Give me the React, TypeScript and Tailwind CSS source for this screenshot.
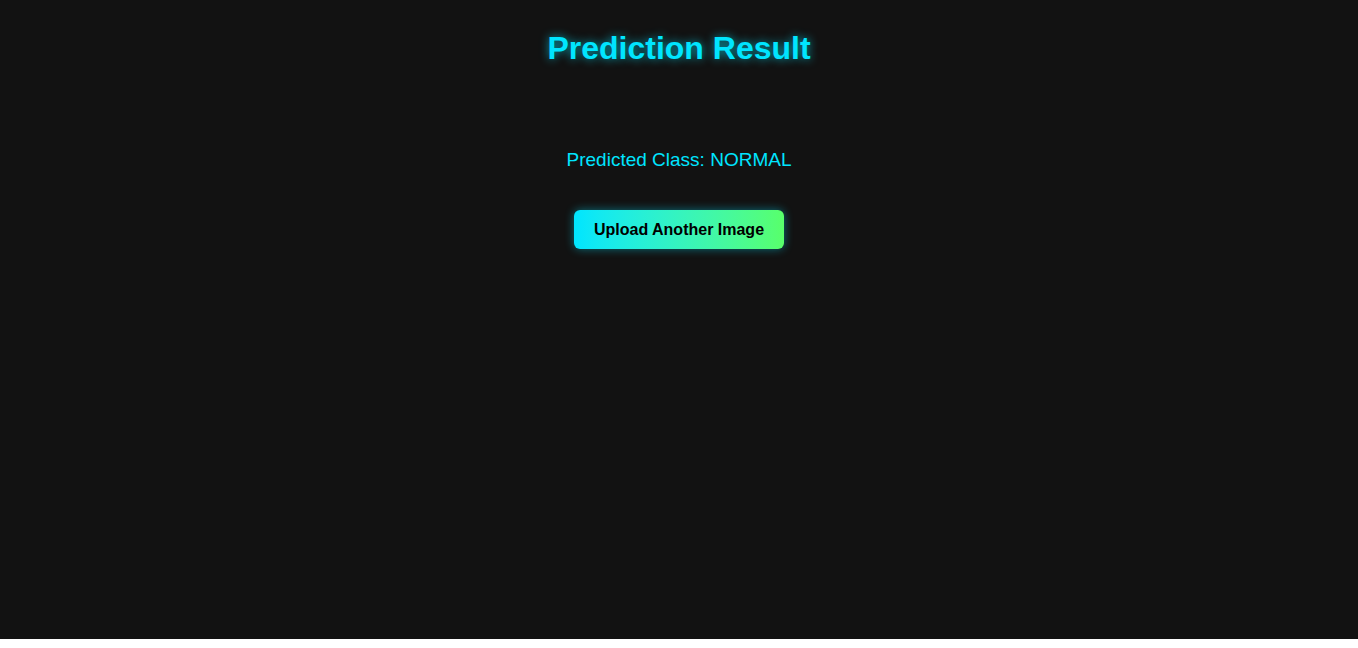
export default function App() {
  return (
    <div className="h-[639px] bg-[#121212] font-['Liberation_Sans',Arial,sans-serif] text-center">
      {/* header */}
      <h1 className="pt-[30px] text-[32px] leading-[37px] font-bold text-[#00e5ff] [text-shadow:0_0_10px_rgba(0,229,255,0.7)]">
        Prediction Result
      </h1>

      {/* result */}
      <p className="mt-[82px] text-[19px] leading-[22px] text-[#00e5ff]">
        Predicted Class: NORMAL
      </p>

      <button className="mt-[39px] h-[39px] px-5 rounded-md bg-gradient-to-r from-[#00e5ff] to-[#58ff6a] text-black text-base font-bold shadow-[0_0_10px_rgba(0,229,255,0.45)]">
        Upload Another Image
      </button>
    </div>
  )
}
